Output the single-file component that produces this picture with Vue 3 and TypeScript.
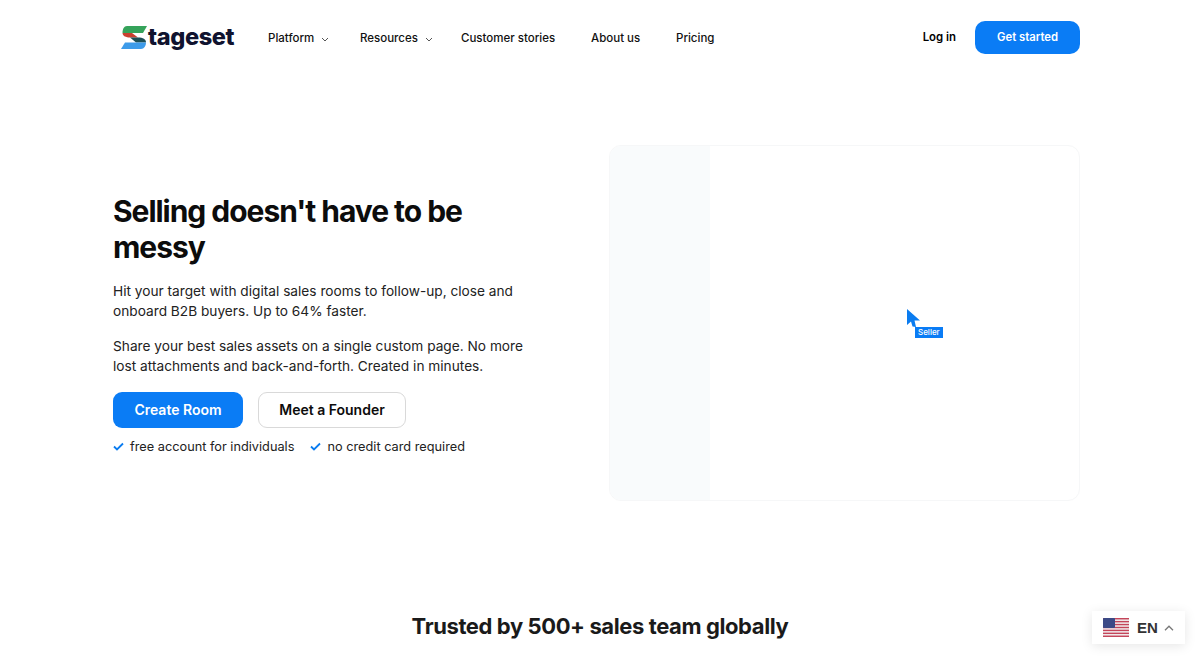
<script setup lang="ts">
const navLinks = [
  { label: 'Platform', caret: true },
  { label: 'Resources', caret: true },
  { label: 'Customer stories', caret: false },
  { label: 'About us', caret: false },
  { label: 'Pricing', caret: false },
]
const perks = ['free account for individuals', 'no credit card required']
const stripes = [0, 1, 2, 3, 4, 5, 6]
</script>

<template>
  <div class="page">
    <header class="nav">
      <a class="logo">
        <svg class="logo-mark" width="26" height="23" viewBox="0 0 26 23">
          <path d="M6 0H26L22 7H1.5C1.5 3 3 0 6 0Z" fill="#35a35a" />
          <path d="M1.5 7H11L17 11.5H9C5 11.5 1.5 10 1.5 7Z" fill="#c9402f" />
          <path d="M9 11.5H17C22 11.5 25 13 25 16.5H15Z" fill="#1d4f56" />
          <path d="M4 16.5H25C25 20 23 23 20 23H0Z" fill="#3d9be9" />
        </svg>
        <span class="logo-text">tageset</span>
      </a>
      <nav class="links">
        <a v-for="link in navLinks" :key="link.label" class="link">
          {{ link.label }}
          <svg v-if="link.caret" width="8" height="5" viewBox="0 0 8 5" class="caret">
            <path d="M1 1l3 3 3-3" fill="none" stroke="#555" stroke-width="1" />
          </svg>
        </a>
      </nav>
      <div class="actions">
        <a class="login">Log in</a>
        <a class="get-started">Get started</a>
      </div>
    </header>

    <section class="hero">
      <div class="copy">
        <h1>Selling doesn't have to be messy</h1>
        <p>Hit your target with digital sales rooms to follow-up, close and onboard B2B buyers. Up to 64% faster.</p>
        <p>Share your best sales assets on a single custom page. No more lost attachments and back-and-forth. Created in minutes.</p>
        <div class="cta">
          <a class="btn primary">Create Room</a>
          <a class="btn outline">Meet a Founder</a>
        </div>
        <ul class="perks">
          <li v-for="perk in perks" :key="perk">
            <svg width="11" height="9" viewBox="0 0 11 9">
              <path d="M1 4.5l3 3 6-6" fill="none" stroke="#0a7cf0" stroke-width="1.8" />
            </svg>
            {{ perk }}
          </li>
        </ul>
      </div>
      <div class="demo">
        <div class="demo-side"></div>
        <div class="cursor">
          <svg width="13" height="19" viewBox="0 0 13 19">
            <path d="M0 0L13 11.5H7.5L9 18L5.5 17.5L4 12.5L0 16Z" fill="#0a7cf0" />
          </svg>
          <span class="cursor-tag">Seller</span>
        </div>
      </div>
    </section>

    <h2 class="trusted">Trusted by 500+ sales team globally</h2>

    <div class="lang">
      <svg width="26" height="19" viewBox="0 0 26 19" class="flag">
        <rect width="26" height="19" rx="2" fill="#f3f3f3" />
        <rect v-for="n in stripes" :key="n" x="0" :y="n * 2.92" width="26" height="1.46" fill="#c4455a" />
        <rect width="12" height="10" rx="1" fill="#3c4a86" />
      </svg>
      <span class="lang-code">EN</span>
      <svg width="10" height="6" viewBox="0 0 10 6">
        <path d="M1 5.2l4-4 4 4" fill="none" stroke="#777" stroke-width="1.3" />
      </svg>
    </div>
  </div>
</template>

<style scoped>
.page {
  position: relative;
  height: 665px;
  overflow: hidden;
  background: #fff;
  color: #111;
  font-family: Inter, "Liberation Sans", sans-serif;
}

/* header */
.nav {
  display: flex;
  align-items: center;
  height: 74px;
  padding: 0 120px 0 121px;
}
.logo {
  display: flex;
  align-items: center;
  width: 147px;
}
.logo-text {
  font-size: 23.6px;
  font-weight: 800;
  color: #10132f;
  letter-spacing: -0.4px;
  margin-left: 1px;
  line-height: 30px;
}
.links {
  display: flex;
  align-items: center;
  padding-top: 2px;
}
.link {
  font-size: 11.5px;
  font-weight: 500;
  color: #111;
  display: flex;
  align-items: center;
}
.link:nth-child(1) { width: 92px; }
.link:nth-child(2) { width: 101px; }
.link:nth-child(3) { width: 130px; }
.link:nth-child(4) { width: 85px; }
.caret { margin-left: 7px; margin-top: 2px; }
.actions {
  margin-left: auto;
  display: flex;
  align-items: center;
  gap: 19px;
}
.login {
  font-size: 11.4px;
  font-weight: 600;
  color: #000;
}
.get-started {
  width: 105px;
  height: 33px;
  border-radius: 10px;
  background: #0a7cf5;
  color: #fff;
  font-size: 11.3px;
  font-weight: 600;
  display: flex;
  align-items: center;
  justify-content: center;
}

/* hero */
.hero {
  display: flex;
  align-items: center;
  justify-content: space-between;
  margin: 71px 120px 0 113px;
  height: 356px;
}
.copy { width: 432px; padding-top: 2px; }
h1 {
  margin: 0 0 16px;
  font-size: 30px;
  line-height: 36px;
  font-weight: 700;
  letter-spacing: -1.04px;
  color: #0c0c0c;
}
.copy p {
  margin: 0 0 14px;
  font-size: 13.7px;
  line-height: 20.5px;
  color: #222;
}
.cta {
  display: flex;
  gap: 15px;
  margin-top: 15px;
}
.btn {
  height: 36px;
  box-sizing: border-box;
  border-radius: 9px;
  display: flex;
  align-items: center;
  justify-content: center;
  font-size: 14px;
  font-weight: 600;
}
.primary {
  width: 130px;
  background: #0a7cf5;
  color: #fff;
}
.outline {
  width: 148px;
  background: #fff;
  border: 1px solid #d9d9d9;
  color: #0c0c0c;
}
.perks {
  list-style: none;
  margin: 10px 0 0;
  padding: 0;
  display: flex;
  gap: 16px;
  font-size: 12.75px;
  line-height: 18px;
  color: #222;
}
.perks li {
  display: flex;
  align-items: center;
  gap: 6px;
}
.demo {
  position: relative;
  width: 471px;
  height: 356px;
  box-sizing: border-box;
  border: 1px solid #f6f7f8;
  border-radius: 12px;
  overflow: hidden;
  display: flex;
}
.demo-side {
  width: 100px;
  background: #f9fbfc;
}
.cursor {
  position: absolute;
  left: 297px;
  top: 163px;
}
.cursor svg { display: block; }
.cursor-tag {
  position: absolute;
  left: 8px;
  top: 18px;
  padding: 0 3px;
  height: 11px;
  line-height: 11px;
  background: #0a7cf5;
  color: #fff;
  font-size: 8px;
  font-weight: 500;
}

/* trusted */
.trusted {
  margin: 110px 0 0;
  text-align: center;
  font-size: 22px;
  line-height: 30px;
  font-weight: 700;
  letter-spacing: -0.4px;
  color: #1a1a1a;
}

/* language widget */
.lang {
  position: absolute;
  left: 1092px;
  top: 611px;
  width: 93px;
  height: 33px;
  box-sizing: border-box;
  padding-left: 11px;
  display: flex;
  align-items: center;
  background: #fff;
  box-shadow: 0 2px 12px rgba(0, 0, 0, 0.1);
}
.lang-code {
  margin: 0 6px 0 8px;
  font-family: "Liberation Sans", sans-serif;
  font-size: 15px;
  font-weight: 700;
  color: #333;
}
</style>
